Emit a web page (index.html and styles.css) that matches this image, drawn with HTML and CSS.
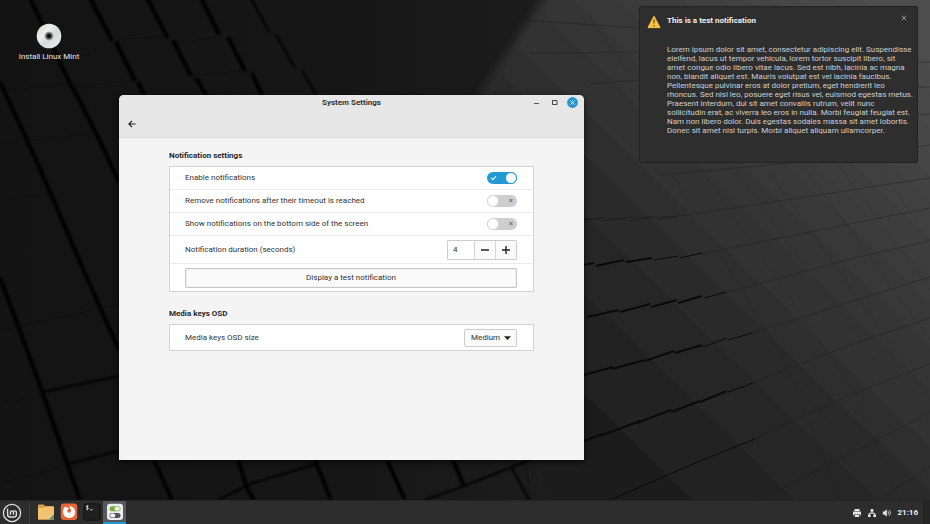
FILE: index.html
```html
<!DOCTYPE html>
<html lang="en">
<head>
<meta charset="utf-8">
<title>System Settings</title>
<link rel="stylesheet" href="styles.css">
</head>
<body>
<main class="desktop">
  <svg class="wallpaper" viewBox="0 0 930 500" preserveAspectRatio="none" aria-hidden="true">
    <defs>
      <linearGradient id="dark" x1="0" y1="0" x2="1" y2="0"><stop offset="0" stop-color="#131313"/><stop offset=".35" stop-color="#161616"/><stop offset=".6" stop-color="#1c1c1c"/><stop offset="1" stop-color="#202020"/></linearGradient>
      <linearGradient id="light" gradientUnits="userSpaceOnUse" x1="930" y1="60" x2="560" y2="440"><stop offset="0" stop-color="#4d4d4d"/><stop offset=".3" stop-color="#3b3b3b"/><stop offset=".65" stop-color="#292929"/><stop offset="1" stop-color="#1c1c1c"/></linearGradient>
      <filter id="soft"><feGaussianBlur stdDeviation="5"/></filter>
      <filter id="blur"><feGaussianBlur stdDeviation="1"/></filter>
    </defs>
    <rect width="930" height="500" fill="url(#dark)"/>
    <path d="M556-20 475 100 540 520H960V-20Z" fill="url(#light)" filter="url(#soft)"/>
    <g fill="none" stroke="#060606" stroke-width="4" filter="url(#blur)">
      <path d="M30-2 58 58 72 88M90-2 112 41M116 42 135 81M147-2 168 38M173 40 191 76M201-2 219 34M228 37 245 71M196 78 206 95M252 73 262 95"/>
      <path d="M251-2 269 32 M276 35 295 68 M302 70 316 95" stroke-width="2"/>
      <path d="M0 82 28 142 50 192 80 262 119 350"/>
      <path d="M72 86 98 137 119 182M138 82 144 95"/>
      <path d="M0 278 16 320 42 391 67 463 80 500M154 460 172 500M238 460 247 488 254 500M315 460 331 500M387 460 405 500M453 460 464 486"/>
      <path d="M43 392 119 376M68 464 119 451M218 500 250 484 316 464M425 500 464 486 530 460M512 468 529 500" stroke-width="2"/>
    </g>
    <g fill="none" stroke="#0c0c0c" stroke-width="1" opacity=".5">
      <path d="M0 143 28 139 M28 141 95 132M0 200 48 194M0 331 119 304M0 404 43 395M0 484 68 465M55 58 90 55M119 39 168 36M175 42 220 37M70 87 135 80M191 76 245 70M0 91 72 83"/>
    </g>
    <g fill="none" stroke="#1b1b1b" stroke-width="1" opacity=".4">
      <path d="M520 20 640 28M530 53 640 52M590 84 640 80M584 219 680 216 930 178M660 175 800 162 930 145M701 254 820 230 930 208M726 293 850 259 930 241M752 333 850 302 930 277M752 383 850 345 930 318M752 439 850 395 930 364M759 500 850 454 930 412M878 500 930 467M918 62H930M918 87H930M918 115 930 114"/>
      <path d="M675 178 801 390 835 430M706 176 850 385 900 500M738 174 880 366M768 170 930 400M803 165 930 340M835 160 930 290M870 155 930 240M780 350 840 500M830 440 875 500M550 30 620 90M590 18 630 75" opacity=".35"/>
    </g>
    <g fill="none" stroke="#0a0a0a" stroke-width="2">
      <path d="M584 265 594 263M596 266 624 260M626 262 652 258" />
      <path d="M654 260 678 256M680 258 702 253" stroke-width="1"/>
      <path d="M587 317 619 310M620 312 650 304M651 307 677 300M678 303 702 296"/>
      <path d="M704 298 726 292" stroke-width="1"/>
      <path d="M584 375 613 367M612 369 645 360M645 361 674 351M675 353 702 345"/>
      <path d="M703 347 727 338M728 340 752 333" stroke-width="1"/>
      <path d="M584 441 602 434M600 436 640 421M637 423 671 410M671 412 700 401M700 402 727 391"/>
      <path d="M728 392 753 383M610 500 700 461 755 439" stroke-width="1"/>
      <path d="M584 220 602 218M602 221 626 218M630 221 653 217M657 219 678 216" stroke-width="1" opacity=".4"/>
    </g>
  </svg>

  <a class="launcher" href="#install">
    <svg width="26" height="26" viewBox="0 0 26 26" aria-hidden="true">
      <defs><linearGradient id="disc" x1="0" y1="0" x2="1" y2="1"><stop offset="0" stop-color="#d2d2d2"/><stop offset=".35" stop-color="#eeeeec"/><stop offset=".55" stop-color="#d6d8dc"/><stop offset="1" stop-color="#f2f2ee"/></linearGradient></defs>
      <circle cx="13" cy="13" r="12.3" fill="url(#disc)"/><circle cx="13" cy="13" r="4.3" fill="#8c8c8c"/><circle cx="13" cy="13" r="3" fill="#555"/><circle cx="13" cy="13" r="2" fill="#080808"/>
    </svg>
    <span>Install Linux Mint</span>
  </a>

  <section class="window" aria-label="System Settings">
    <header class="window-head">
      <div class="titlebar">
        <h1>System Settings</h1>
        <div class="window-controls">
          <button type="button" aria-label="Minimize"><svg width="11" height="11" viewBox="0 0 11 11"><path d="M3 6.5H8" stroke="#555" stroke-width="1"/></svg></button>
          <button type="button" aria-label="Maximize"><svg width="11" height="11" viewBox="0 0 11 11"><path d="M3.5 3.5H8V7.5H3.5Z" fill="none" stroke="#444"/></svg></button>
          <button type="button" aria-label="Close"><svg width="11" height="11" viewBox="0 0 11 11"><circle cx="5.5" cy="5.5" r="5.4" fill="#2499d1"/><path d="M3.5 3.5 7.5 7.5M7.5 3.5 3.5 7.5" stroke="#fff" stroke-width="1"/></svg></button>
        </div>
      </div>
      <div class="toolbar">
        <button type="button" aria-label="Back"><svg width="8" height="8" viewBox="0 0 8 8"><path d="M4 .8.9 4 4 7.2M1 4H7.6" fill="none" stroke="#222" stroke-width="1.2"/></svg></button>
      </div>
    </header>
    <div class="content">
      <h2>Notification settings</h2>
      <div class="panel">
        <div class="row"><label for="enable">Enable notifications</label><input class="switch" id="enable" type="checkbox" checked></div>
        <div class="row"><label for="timeout">Remove notifications after their timeout is reached</label><input class="switch" id="timeout" type="checkbox"></div>
        <div class="row"><label for="bottom">Show notifications on the bottom side of the screen</label><input class="switch" id="bottom" type="checkbox"></div>
        <div class="row row-tall">
          <label for="duration">Notification duration (seconds)</label>
          <div class="spin">
            <input id="duration" type="text" inputmode="numeric" value="4">
            <button type="button" aria-label="Decrease"><svg width="10" height="10" viewBox="0 0 10 10"><path d="M1 5H9" stroke="#222" stroke-width="1.4"/></svg></button>
            <button type="button" aria-label="Increase"><svg width="10" height="10" viewBox="0 0 10 10"><path d="M1 5H9M5 1V9" stroke="#222" stroke-width="1.4"/></svg></button>
          </div>
        </div>
        <div class="row row-tall"><button class="test" type="button">Display a test notification</button></div>
      </div>
      <h2>Media keys OSD</h2>
      <div class="panel">
        <div class="row row-single">
          <label for="osd">Media keys OSD size</label>
          <div class="dropdown">
            <select id="osd"><option>Medium</option></select>
            <svg width="7" height="4" viewBox="0 0 7 4" aria-hidden="true"><path d="M0 .2H7L3.5 4Z" fill="#222"/></svg>
          </div>
        </div>
      </div>
    </div>
  </section>

  <aside class="notification">
    <svg width="14" height="14" viewBox="0 0 14 14" aria-hidden="true"><path d="M7 1.2 13 12.6H1Z" fill="#f9c440" stroke="#f9c440" stroke-linejoin="round"/><path d="M6.3 4.5H7.7L7.4 9H6.6Z" fill="#6b4a10"/><circle cx="7" cy="10.7" r=".8" fill="#6b4a10"/></svg>
    <div class="message">
      <h2>This is a test notification</h2>
      <p>Lorem ipsum dolor sit amet, consectetur adipiscing elit. Suspendisse<br>eleifend, lacus ut tempor vehicula, lorem tortor suscipit libero, sit<br>amet congue odio libero vitae lacus. Sed est nibh, lacinia ac magna<br>non, blandit aliquet est. Mauris volutpat est vel lacinia faucibus.<br>Pellentesque pulvinar eros at dolor pretium, eget hendrerit leo<br>rhoncus. Sed nisl leo, posuere eget risus vel, euismod egestas metus.<br>Praesent interdum, dui sit amet convallis rutrum, velit nunc<br>sollicitudin erat, ac viverra leo eros in nulla. Morbi feugiat feugiat est.<br>Nam non libero dolor. Duis egestas sodales massa sit amet lobortis.<br>Donec sit amet nisi turpis. Morbi aliquet aliquam ullamcorper.</p>
    </div>
    <button type="button" aria-label="Dismiss"><svg width="6" height="6" viewBox="0 0 6 6"><path d="M.8.8 5.2 5.2M5.2.8.8 5.2" stroke="#999"/></svg></button>
  </aside>
</main>

<footer class="taskbar">
  <button class="menu" type="button" aria-label="Menu"><svg width="20" height="20" viewBox="0 0 20 20"><g fill="none" stroke="#dedede"><circle cx="10" cy="10" r="8.6" stroke-width="1.3"/><path d="M5.6 5.6V11.5Q5.6 14 8 14H12Q14.4 14 14.4 11.7V9.5Q14.4 7.9 12.9 7.9T11.4 9.5V11.8M11.4 9.5Q11.4 7.9 9.9 7.9T8.4 9.5V11.8" stroke-width="1.4"/></g></svg></button>
  <nav class="apps">
    <button type="button" aria-label="Files"><svg width="18" height="18" viewBox="0 0 18 18"><path d="M1 2.5Q1 1.5 2 1.5H6.5L8 3H16Q17 3 17 4V15.5Q17 16.5 16 16.5H2Q1 16.5 1 15.5Z" fill="#d9a24a"/><path d="M1 5H7L8.5 4H17V16.5H1Z" fill="#f4c36f"/><path d="M17 11V16.5H11.5Z" fill="#5c8d7a"/><path d="M11.5 16.5 12.5 12 17 11Z" fill="#e3c888"/></svg></button>
    <button type="button" aria-label="Firefox"><svg width="18" height="18" viewBox="0 0 18 18"><rect x=".8" y=".5" width="16.4" height="16.5" rx="3" fill="#e8683a"/><path d="M4.4 4.6 5.2 3.4 6.5 4.8Q8 4.2 9.2 5.4 8 6 7.2 7 7.2 9.8 9.2 9.8 11.3 9.6 11 7.2 10.6 5.4 9 3 15.2 3.8 15.2 9.2 14.8 14.8 9.1 14.9 3.2 14.6 3 9.1 3 6.4 4.4 4.6Z" fill="#fff"/></svg></button>
    <button type="button" aria-label="Terminal"><svg width="18" height="18" viewBox="0 0 18 18"><rect x=".8" y=".8" width="16.4" height="16.4" rx="2.5" fill="#202020" stroke="#111"/><path d="M5.5 3Q3.2 2.6 3.3 3.8 3.5 4.6 4.5 4.7 5.7 5 5.4 5.9 5 6.6 3.2 6.2M4.4 2V7.2M7 6.8H9.8" fill="none" stroke="#ddd" stroke-width=".8"/></svg></button>
    <button class="active" type="button" aria-label="System Settings"><svg width="18" height="18" viewBox="0 0 18 18"><rect x="1" y=".8" width="16" height="16.2" rx="3" fill="#ececec"/><rect x="3.5" y="3.3" width="11" height="5" rx="2.5" fill="#6fb13c"/><rect x="8.5" y="3.8" width="5.4" height="4" rx="2" fill="#f4f4f4"/><rect x="3.5" y="10" width="11" height="5" rx="2.5" fill="#555"/><rect x="4.1" y="10.5" width="5.2" height="4" rx="2" fill="#f4f4f4"/></svg></button>
  </nav>
  <div class="tray">
    <svg width="10" height="10" viewBox="0 0 10 10" aria-hidden="true"><path d="M2.5 1H7.5V3H2.5ZM1 3.5H9V7.2H7.8V6H2.2V7.2H1ZM2.8 6.6H7.2V9H2.8Z" fill="#e5e5e5"/></svg>
    <svg width="10" height="10" viewBox="0 0 10 10" aria-hidden="true"><path d="M3.7 1H6.3V3.7H3.7ZM1 6.5H3.6V9H1ZM6.4 6.5H9V9H6.4Z" fill="#e5e5e5"/><path d="M5 3V5.2M2.3 7V5.2H7.7V7" fill="none" stroke="#e5e5e5"/></svg>
    <svg width="10" height="10" viewBox="0 0 10 10" aria-hidden="true"><path d="M.8 3.4H2.4L4.8 1.3V8.7L2.4 6.6H.8Z" fill="#e5e5e5"/><path d="M6 3.3Q7 5 6 6.7M7.4 2.1Q9.6 5 7.4 7.9" fill="none" stroke="#c8c8c8" stroke-width=".9"/></svg>
    <time>21:16</time>
  </div>
  <span class="show-desktop"></span>
</footer>
</body>
</html>
```
FILE: styles.css
```css
*, *::before, *::after { box-sizing: border-box; }
body {
  margin: 0;
  min-height: 100vh;
  display: grid;
  grid-template-rows: 1fr 24px;
  background: #151515;
  color: #333;
  font: 8px/10px Roboto, sans-serif;
}
button, input, select { font: inherit; color: inherit; margin: 0; }
button { border: 0; background: none; padding: 0; display: flex; align-items: center; justify-content: center; }
svg { display: block; flex: none; }
h1, h2, p { margin: 0; font-size: 8px; }

.desktop { position: relative; overflow: hidden; }
.wallpaper { position: absolute; width: 100%; height: 100%; }
.launcher {
  position: absolute; left: 9px; top: 23px; width: 80px;
  display: flex; flex-direction: column; align-items: center; gap: 3px;
  color: #e8e8e8; text-decoration: none;
}

.window {
  position: absolute; left: 119px; top: 95px; width: 50%; min-height: 365px;
  background: #f4f4f4; border-radius: 5px 5px 0 0; overflow: hidden;
  box-shadow: 0 2px 6px #000a;
}
.window-head { background: #e7e7e7; border-bottom: 1px solid #dadada; }
.titlebar { display: grid; grid-template-columns: 1fr auto 1fr; align-items: center; height: 15px; padding: 0 6px; }
.titlebar h1 { grid-column: 2; color: #333; }
.window-controls { display: flex; justify-content: flex-end; gap: 7px; }
.toolbar { display: flex; align-items: center; height: 27px; padding: 0 9px; }
.content { padding: 13px 50px 0; }
.content h2 { color: #282828; margin-bottom: 5px; }
.panel + h2 { margin-top: 17px; }
.panel { background: #fff; border: 1px solid #d3d3d3; }
.row { display: flex; align-items: center; justify-content: space-between; box-sizing: content-box; height: 22px; padding: 0 16px 0 15px; }
.row + .row { border-top: 1px solid #ebebeb; }
.row-tall { height: 27px; }
.row-single { height: 25px; }

.switch {
  appearance: none; position: relative; width: 30px; height: 12px;
  border-radius: 6px; background: #cecece;
}
.switch::before {
  content: ""; position: absolute; left: 0; top: 0; width: 12px; height: 12px;
  border-radius: 6px; background: #fff; border: 1px solid #d8d8d8;
}
.switch::after { content: "×"; position: absolute; right: 4px; top: 1px; color: #777; font: bold 8px/10px Roboto, sans-serif; }
.switch:checked { background: #239ad3; }
.switch:checked::before { left: auto; right: 0; border-color: #239ad3; }
.switch:checked::after {
  content: ""; left: 4px; right: auto; top: 4px; width: 5px; height: 3px;
  border: solid #fff; border-width: 0 0 1px 1px; transform: rotate(-45deg);
}
.spin { display: grid; grid-template-columns: 26px 21px 21px; height: 20px; border: 1px solid #ccc; border-radius: 1px; background: #fafafa; }
.spin input { width: 100%; min-width: 0; border: 0; padding: 0 5px; background: #fff; }
.spin button { border-left: 1px solid #d6d6d6; }
.test { flex: 1; height: 20px; border: 1px solid #c8c8c8; border-radius: 1px; background: #fafafa; outline: 1px solid #efefef; outline-offset: -2px; }
.dropdown { display: grid; align-items: center; width: 53px; }
.dropdown > * { grid-area: 1 / 1; }
.dropdown select { appearance: none; height: 18px; padding: 0 6px; border: 1px solid #ccc; border-radius: 2px; background: #fafafa; }
.dropdown svg { justify-self: end; margin-right: 6px; pointer-events: none; }

.notification {
  position: absolute; right: 12px; top: 6px; width: 30%; min-height: 157px;
  display: flex; align-items: flex-start; gap: 6px; padding: 8px 10px 26px 7px;
  background: #2e2e2e; border: 1px solid #222; border-radius: 2px; color: #cfcfcf;
}
.message { flex: 1; min-width: 0; padding-top: 1px; white-space: nowrap; }
.message h2 { color: #f0f0f0; margin-bottom: 19px; }
.message p { line-height: 9px; }

.taskbar { display: flex; align-items: stretch; background: #2d2d2d; border-top: 1px solid #242424; }
.menu { width: 24px; }
.apps { display: flex; align-items: stretch; margin-left: 5px; padding-left: 4px; border-left: 1px solid #3d3d3d; }
.apps button { width: 23px; border-bottom: 2px solid transparent; }
.apps .active { background: #555a5e; border-color: #2499d1; }
.tray { display: flex; align-items: center; gap: 5px; margin-left: auto; color: #eee; font-weight: bold; }
.show-desktop { width: 7px; margin-left: 5px; background: #252525; }
```
